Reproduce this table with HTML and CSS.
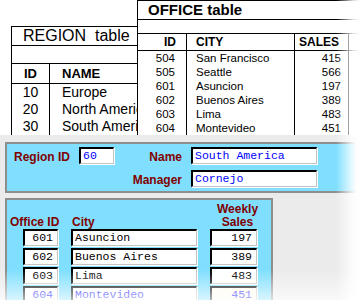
FILE: index.html
```html
<!DOCTYPE html>
<html>
<head>
<meta charset="utf-8">
<link rel="stylesheet" href="styles.css">
</head>
<body>
<div class="page">
  <div class="top">
    <div class="region">
      <div class="t-title">REGION  table</div>
      <div class="t-empty"></div>
      <div class="r-row r-head"><span class="r-id">ID</span><span class="r-name">NAME</span></div>
      <div class="r-row"><span class="r-id">10</span><span class="r-name">Europe</span></div>
      <div class="r-row"><span class="r-id">20</span><span class="r-name">North America</span></div>
      <div class="r-row"><span class="r-id">30</span><span class="r-name">South America</span></div>
    </div>
    <div class="office">
      <div class="o-title">OFFICE table</div>
      <div class="o-empty"></div>
      <div class="o-row o-head"><span class="c-id">ID</span><span class="c-city">CITY</span><span class="c-sales">SALES</span><span class="c-more"></span></div>
      <div class="o-row"><span class="c-id">504</span><span class="c-city">San Francisco</span><span class="c-sales">415</span><span class="c-more"></span></div>
      <div class="o-row"><span class="c-id">505</span><span class="c-city">Seattle</span><span class="c-sales">566</span><span class="c-more"></span></div>
      <div class="o-row"><span class="c-id">601</span><span class="c-city">Asuncion</span><span class="c-sales">197</span><span class="c-more"></span></div>
      <div class="o-row"><span class="c-id">602</span><span class="c-city">Buenos Aires</span><span class="c-sales">389</span><span class="c-more"></span></div>
      <div class="o-row"><span class="c-id">603</span><span class="c-city">Lima</span><span class="c-sales">483</span><span class="c-more"></span></div>
      <div class="o-row"><span class="c-id">604</span><span class="c-city">Montevideo</span><span class="c-sales">451</span><span class="c-more"></span></div>
    </div>
  </div>
  <div class="bottom">
    <div class="panel1">
      <label class="lbl lbl-rid">Region ID</label>
      <div class="field f-rid">60</div>
      <label class="lbl lbl-name">Name</label>
      <div class="field f-name">South America</div>
      <label class="lbl lbl-mgr">Manager</label>
      <div class="field f-mgr">Cornejo</div>
    </div>
    <div class="panel2">
      <div class="p2-head">
        <span class="h-office">Office ID</span>
        <span class="h-city">City</span>
        <span class="h-sales">Weekly<br>Sales</span>
      </div>
      <div class="p2-row"><div class="field num w-id">601</div><div class="field w-city">Asuncion</div><div class="field num w-sales">197</div></div>
      <div class="p2-row"><div class="field num w-id">602</div><div class="field w-city">Buenos Aires</div><div class="field num w-sales">389</div></div>
      <div class="p2-row"><div class="field num w-id">603</div><div class="field w-city">Lima</div><div class="field num w-sales">483</div></div>
      <div class="p2-row current"><div class="field num w-id">604</div><div class="field w-city">Montevideo</div><div class="field num w-sales cream">451</div></div>
    </div>
  </div>
  <div class="fade-right"></div>
  <div class="fade-bottom"></div>
</div>
</body>
</html>
```

FILE: styles.css
```css
html, body {
  margin: 0;
  padding: 0;
  background: #fff;
}
.page {
  position: relative;
  width: 360px;
  height: 300px;
  overflow: hidden;
  font-family: "Liberation Sans", Arial, sans-serif;
  color: #000;
}
.top {
  position: relative;
  height: 135px;
  background: #fff;
  overflow: hidden;
}
.region {
  margin: 26px 0 0 11px;
  width: 170px;
  border-left: 1px solid #000;
  border-top: 1px solid #000;
}
.t-title {
  height: 18px;
  line-height: 18px;
  border-bottom: 1px solid #000;
  font-size: 16px;
  padding-left: 11px;
  white-space: pre;
}
.t-empty {
  height: 17px;
  border-bottom: 1px solid #000;
}
.r-row {
  display: flex;
  height: 17px;
  line-height: 17px;
  font-size: 14px;
  white-space: nowrap;
}
.r-head {
  height: 19px;
  line-height: 20px;
  font-size: 13px;
  font-weight: bold;
  border-bottom: 1px solid #000;
}
.r-id {
  width: 37px;
  border-right: 1px solid #000;
  text-align: center;
}
.r-name {
  padding-left: 12px;
}
.office {
  position: absolute;
  left: 137px;
  top: 0;
  width: 260px;
  height: 140px;
  background: #fff;
  border-left: 1px solid #000;
  border-top: 1px solid #000;
}
.o-title {
  height: 18px;
  line-height: 18px;
  border-bottom: 1px solid #000;
  font-size: 15px;
  font-weight: bold;
  padding-left: 10px;
}
.o-empty {
  height: 13px;
  border-bottom: 1px solid #000;
}
.o-row {
  display: flex;
  height: 14px;
  line-height: 14px;
  font-size: 11.5px;
  white-space: nowrap;
}
.o-head {
  height: 16px;
  line-height: 17px;
  font-size: 12px;
  font-weight: bold;
  border-bottom: 1px solid #000;
}
.c-id {
  width: 49px;
  box-sizing: border-box;
  padding-right: 11px;
  text-align: right;
  border-right: 1px solid #000;
}
.o-head .c-id { padding-right: 10px; }
.c-city {
  width: 108px;
  box-sizing: border-box;
  padding-left: 9px;
  border-right: 1px solid #000;
}
.c-sales {
  width: 54px;
  box-sizing: border-box;
  padding-right: 7px;
  text-align: right;
  border-right: 1px solid #000;
}
.o-head .c-sales { padding-right: 9px; }
.c-more {
  flex: 1;
}
.bottom {
  height: 165px;
  box-sizing: border-box;
  background: #ebebeb;
  padding: 7px 0 0 5px;
  overflow: hidden;
}
.panel1 {
  width: 350px;
  height: 51px;
  box-sizing: border-box;
  border: 2px solid #8e8e8e;
  border-right: none;
  background: #80dfff;
  padding-top: 3px;
  display: grid;
  grid-template-columns: 63px 35px 59px 126px;
  grid-auto-rows: 17px;
  column-gap: 9px;
  row-gap: 6px;
}
.lbl {
  font-size: 12px;
  font-weight: bold;
  color: #800000;
  text-align: right;
  line-height: 17px;
  padding-top: 2px;
}
.lbl-rid { grid-column: 1; grid-row: 1; }
.f-rid { grid-column: 2; grid-row: 1; }
.lbl-name { grid-column: 3; grid-row: 1; }
.f-name { grid-column: 4; grid-row: 1; }
.lbl-mgr { grid-column: 3; grid-row: 2; }
.f-mgr { grid-column: 4; grid-row: 2; }
.field {
  box-sizing: border-box;
  height: 17px;
  background: #fff;
  border-style: solid;
  border-width: 2px 1px 1px 2px;
  border-color: #000 #c4c4c4 #c4c4c4 #000;
  box-shadow: 1px 1px 0 #fff;
  font-family: "Liberation Mono", "Courier New", monospace;
  font-size: 11.5px;
  line-height: 14px;
  padding-left: 2px;
  white-space: nowrap;
  overflow: hidden;
}
.panel1 .field {
  color: #0000ff;
}
.panel2 {
  margin-top: 5px;
  width: 268px;
  height: 130px;
  box-sizing: border-box;
  border: 2px solid #8e8e8e;
  background: #80dfff;
  padding: 3px 0 0 3px;
}
.p2-head {
  display: flex;
  align-items: flex-end;
  height: 26px;
  font-size: 12px;
  font-weight: bold;
  color: #800000;
  line-height: 14px;
  white-space: nowrap;
}
.h-office {
  width: 50px;
}
.h-city {
  margin-left: 12px;
  width: 125px;
}
.h-sales {
  margin-left: 13px;
  width: 55px;
  text-align: center;
  line-height: 13px;
}
.p2-row {
  display: flex;
  margin-bottom: 2px;
}
.w-id {
  margin-left: 13px;
  width: 35px;
}
.w-city {
  margin-left: 13px;
  width: 126px;
}
.w-sales {
  margin-left: 13px;
  width: 47px;
}
.num {
  text-align: right;
  padding-right: 4px;
}
.current .field {
  color: #0000ff;
}
.cream {
  background: #fffbee;
}
.fade-right {
  position: absolute;
  right: 0;
  top: 0;
  width: 24px;
  height: 300px;
  background: linear-gradient(to right, rgba(255,255,255,0), rgba(255,255,255,0.85) 70%, #fff);
}
.fade-bottom {
  position: absolute;
  left: 0;
  bottom: 0;
  width: 360px;
  height: 30px;
  background: linear-gradient(to bottom, rgba(255,255,255,0), rgba(255,255,255,0.7));
}
```
